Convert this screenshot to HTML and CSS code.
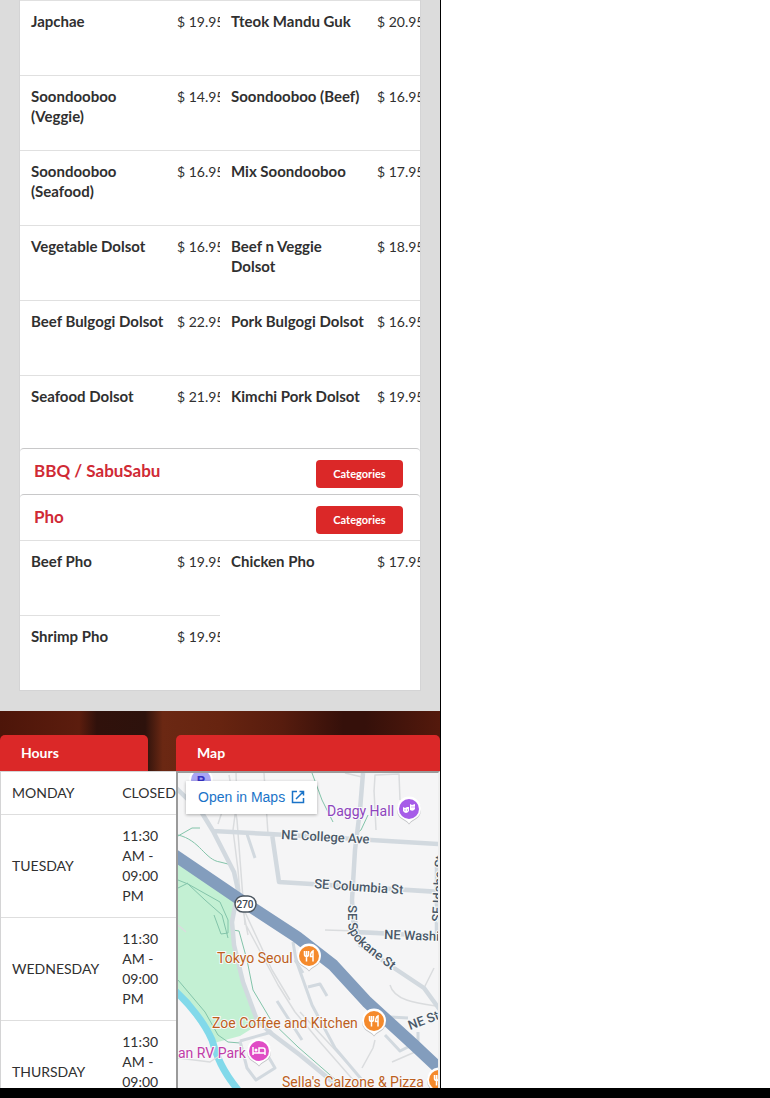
FILE: index.html
```html
<!DOCTYPE html>
<html lang="en">
<head>
    <meta charset="UTF-8">
    <meta name="viewport" content="width=device-width, initial-scale=1.0">
    <title>Menu</title>
    <link rel="stylesheet" href="styles.css">
</head>
<body>

    <div class="viewport">
        <div class="page">
            <main class="menu">
                <div class="accordion">
                    <div class="items">
                        <div class="item"><h4 class="name">Japchae</h4><span class="price">$ 19.95</span></div>
                        <div class="item"><h4 class="name">Tteok Mandu Guk</h4><span class="price">$ 20.95</span></div>
                        <div class="item"><h4 class="name">Soondooboo (Veggie)</h4><span class="price">$ 14.95</span></div>
                        <div class="item"><h4 class="name">Soondooboo (Beef)</h4><span class="price">$ 16.95</span></div>
                        <div class="item"><h4 class="name">Soondooboo (Seafood)</h4><span class="price">$ 16.95</span></div>
                        <div class="item"><h4 class="name">Mix Soondooboo</h4><span class="price">$ 17.95</span></div>
                        <div class="item"><h4 class="name">Vegetable Dolsot</h4><span class="price">$ 16.95</span></div>
                        <div class="item"><h4 class="name">Beef n Veggie Dolsot</h4><span class="price">$ 18.95</span></div>
                        <div class="item"><h4 class="name">Beef Bulgogi Dolsot</h4><span class="price">$ 22.95</span></div>
                        <div class="item"><h4 class="name">Pork Bulgogi Dolsot</h4><span class="price">$ 16.95</span></div>
                        <div class="item"><h4 class="name">Seafood Dolsot</h4><span class="price">$ 21.95</span></div>
                        <div class="item"><h4 class="name">Kimchi Pork Dolsot</h4><span class="price">$ 19.95</span></div>
                    </div>

                    <div class="title">
                        <h3>BBQ / SabuSabu</h3>
                        <button class="button" type="button">Categories</button>
                    </div>

                    <div class="title">
                        <h3>Pho</h3>
                        <button class="button" type="button">Categories</button>
                    </div>
                    <div class="items">
                        <div class="item"><h4 class="name">Beef Pho</h4><span class="price">$ 19.95</span></div>
                        <div class="item"><h4 class="name">Chicken Pho</h4><span class="price">$ 17.95</span></div>
                        <div class="item"><h4 class="name">Shrimp Pho</h4><span class="price">$ 19.95</span></div>
                    </div>
                </div>
            </main>

            <footer class="footer">
                <section class="hours">
                    <h4 class="heading">Hours</h4>
                    <table class="hours-table">
                        <tr><th scope="row">MONDAY</th><td>CLOSED</td></tr>
                        <tr><th scope="row">TUESDAY</th><td>11:30 AM - 09:00 PM</td></tr>
                        <tr><th scope="row">WEDNESDAY</th><td>11:30 AM - 09:00 PM</td></tr>
                        <tr><th scope="row">THURSDAY</th><td>11:30 AM - 09:00 PM</td></tr>
                    </table>
                </section>

                <section class="location">
                    <h4 class="heading">Map</h4>
                    <div class="map">
                        <svg class="map-canvas" viewBox="178 773 260 360" preserveAspectRatio="xMinYMin slice">
                            <defs>
                                <path id="pin" d="M0 14.500C-2.500 11-6 10.500-9 7.500A12 12 0 1 1 9 7.500C6 10.500 2.500 11 0 14.500Z"/>
                                <g id="food">
                                    <use href="#pin" fill="#8b8f94" opacity=".5" y="1"/>
                                    <use href="#pin" fill="#fff"/>
                                    <circle r="10" fill="#f58a2c"/>
                                    <path d="M-4.500-5v3.500a2 2 0 0 0 4 0V-5M-2.500-5V5.500M4 5.500V-5C2-4 1.500-2 1.500.5H4" fill="none" stroke="#fff" stroke-width="1.500"/>
                                </g>
                            </defs>

                            <!-- park and river -->
                            <path class="park" d="M176 862 236 903 232 925 236 950 245 985 259 1024 240 1036 214 1043 176 992Z"/>
                            <path class="river" d="M174 990C190 1004 205 1024 212 1040C217 1057 222 1070 238 1090"/>

                            <!-- minor lines -->
                            <path class="rail" d="M236 773 237 800 233 830 238 870 240 895 248 935M229 775 237 820 245 925M246 925 262 955 278 985 295 1012 320 1042 362 1090M244 910 258 940 272 970 290 1000M264 773 268 834M374 792 375 775 399 774 400 800M345 773 362 777M178 1058 210 1062 225 1052M218 824 222 812 217 806M376 830 374 790M390 985C394 1000 415 1003 436 1006M424 988 434 968M362 1068 373 1048 375 1040M325 930 390 932M392 1062 415 1052M300 1012 350 1066M178 925 186 932"/>
                            <path class="trail" d="M178 835C200 840 205 860 220 862L232 865M178 836 192 828 200 828M178 880 188 884 205 900 222 915 228 938M178 888 188 883M188 884 220 902 228 920V933L221 934 214 915M233 930 239 931 247 960 253 990 272 1022 298 1047 345 1088M178 980 205 1012 218 1035 228 1042 240 1043M312 773 322 800 333 822M368 815 361 830 357 833"/>

                            <!-- streets -->
                            <path class="road" d="M176 788 202 813 213 831 234 872 238 890 232 922 234 945 243 982 257 1020 272 1034 300 1055 345 1092M213 831 270 834 440 844M272 834 279 882 440 892M363 773 360 810 355 850 352 900 354 932 440 936M437 860V935M352 905 360 945 397 970 424 988 440 1010"/>
                            <path class="road thin" d="M247 834 255 858M293 942 296 960 312 1005 335 1048 362 1080M303 973 295 960M240 1041 272 1032M240 1041 247 1068 256 1080 275 1068 268 1056M277 1001 302 1040M308 987 320 984 327 996M390 1017 408 1018M418 1032V1042L412 1046M385 1035 400 1051 412 1045"/>

                            <path class="highway" d="M170 852 245 903 297 937 333 965 367 1002 413 1044 445 1074"/>

                            <rect x="235" y="896" width="21" height="16" rx="8" fill="#fff" stroke="#4b555f" stroke-width="1.500"/>
                            <text class="shield" x="245" y="908" text-anchor="middle">270</text>

                            <g class="street">
                                <text transform="translate(281 839) rotate(3)">NE College Ave</text>
                                <text transform="translate(314 888) rotate(4)">SE Columbia St</text>
                                <text transform="translate(384 939) rotate(2)">NE Washington St</text>
                                <path id="spokane" d="M348 905 348 924C350 942 362 947 400 977" fill="none"/>
                                <text><textPath href="#spokane">SE Spokane St</textPath></text>
                                <text transform="translate(441 922) rotate(-87)">SE Idaho St</text>
                                <text transform="translate(410 1030) rotate(-20)">NE State St</text>
                            </g>

                            <g class="place">
                                <text x="327" y="816" fill="#8e44bd">Daggy Hall</text>
                                <text x="217" y="963" fill="#bd5f1d">Tokyo Seoul</text>
                                <text x="212" y="1028" fill="#bd5f1d">Zoe Coffee and Kitchen</text>
                                <text x="178" y="1058" fill="#c13ca8">an RV Park</text>
                                <text x="282" y="1087" fill="#bd5f1d">Sella's Calzone &amp; Pizza</text>
                            </g>

                            <use href="#food" x="309" y="956"/>
                            <use href="#food" x="374" y="1021"/>
                            <use href="#food" x="439" y="1080"/>

                            <g transform="translate(409 809)">
                                <use href="#pin" fill="#8b8f94" opacity=".5" y="1"/>
                                <use href="#pin" fill="#fff"/>
                                <circle r="10" fill="#a65ce8"/>
                                <path d="M-6-2 -4-1 -2-2H0V2Q-3 6-6 2ZM1-5 3-4 6-5V0Q4 3 1 1Z" fill="#fff"/>
                                <path d="M-4.500 1h1M-2 1h1M2.500-2h1M4.500-2h1" stroke="#a65ce8"/>
                            </g>
                            <g transform="translate(259 1051)">
                                <use href="#pin" fill="#8b8f94" opacity=".5" y="1"/>
                                <use href="#pin" fill="#fff"/>
                                <circle r="10" fill="#e04cc5"/>
                                <path d="M-6-4V4M-6 2H6V4M6 2V-1Q6-3 4-3H0V2" fill="none" stroke="#fff" stroke-width="1.500"/>
                                <circle cx="-3" cy="-1" r="1.500" fill="#fff"/>
                            </g>
                            <circle cx="201" cy="780" r="12" fill="#fff"/>
                            <circle cx="201" cy="780" r="10" fill="#a9a5f5"/>
                            <text class="parking" x="201" y="785" text-anchor="middle">P</text>
                        </svg>
                        <a class="open-maps" href="#">Open in Maps
                            <svg width="14" height="14" viewBox="0 0 14 14" fill="none" stroke="#1a73c8" stroke-width="1.500"><path d="M6 1.500H1.500v11h11V8M8.500 1.500h4v4M12.500 1.500 5 9"/></svg>
                        </a>
                    </div>
                </section>
            </footer>
        </div>
        <div class="side"></div>
    </div>

</body>
</html>
```
FILE: styles.css
```css
* {
    box-sizing: border-box;
}

body {
    margin: 0;
    height: 100vh;
    overflow: hidden;
    border-bottom: 10px solid #000;
    background-color: #fff;
    font-family: Lato, "Liberation Sans", sans-serif;
    font-size: 14px;
    line-height: 20px;
    color: #303030;
}

h3,
h4 {
    margin: 0;
}

.viewport {
    display: grid;
    grid-template-columns: minmax(0, 4fr) minmax(0, 3fr);
    height: 100%;
    overflow: hidden;
}

.side {
    border-left: 1px solid #000;
}

/* Menu */
.menu {
    background-color: #dcdcdc;
    padding: 0 20px 21px;
}

.accordion {
    background-color: #fff;
    box-shadow: 0 0 0 1px #d4d4d5;
}

.items {
    display: flex;
    flex-wrap: wrap;
}

.items:first-child {
    margin-bottom: -2px;
}

.item {
    display: flex;
    width: 50%;
    min-height: 75px;
    padding-top: 10px;
    border-top: 1px solid #e0e0e0;
    overflow: hidden;
}

.name {
    flex: 0 0 78%;
    padding: 0 9px 0 11px;
    font-size: 15px;
}

.price {
    padding: 1px 0 0 1px;
    white-space: nowrap;
}

.title {
    display: flex;
    justify-content: space-between;
    align-items: center;
    height: 46px;
    padding: 0 17px 2px 14px;
    border-top: 1px solid #c8c8c9;
    border-radius: 4px 4px 0 0;
    background-color: #fff;
}

.title h3 {
    font-size: 17px;
    color: #d02a35;
}

.button {
    width: 87px;
    height: 28px;
    margin-top: 6px;
    padding: 0;
    border: none;
    border-radius: 4px;
    background-color: #db2828;
    color: #fff;
    font-family: inherit;
    font-size: 11px;
    font-weight: bold;
    cursor: pointer;
}

/* Footer */
.footer {
    display: grid;
    grid-template-columns: 2fr 3fr;
    padding-top: 24px;
    background: linear-gradient(90deg, #4d1509, #5c1d0e 18%, #30110b 22%, #2d120c 33%, #6b2813 37%, #672410 50%, #571c0e 64%, #35100a 78%, #35100a 83%, #54190c);
}

.heading {
    height: 36px;
    padding: 8px 21px;
    border-radius: 5px 5px 0 0;
    background-color: #db2828;
    color: #fff;
    font-size: 14px;
}

.hours .heading {
    width: 84%;
}

.hours-table {
    width: 100%;
    table-layout: fixed;
    border-spacing: 0;
    border: solid #d4d4d5;
    border-width: 1px 0 0 1px;
    background-color: #fff;
}

.hours-table th,
.hours-table td {
    padding: 11px 0 11px 11px;
    border-bottom: 1px solid #dedede;
    font-weight: normal;
    text-align: left;
    vertical-align: middle;
}

.hours-table th {
    width: 63%;
}

.map {
    position: relative;
    height: 360px;
    overflow: hidden;
    border: 2px inset #eee;
    background-color: #f5f5f6;
}

.map-canvas {
    display: block;
    width: 100%;
    height: 100%;
    font-family: Roboto, sans-serif;
}

.open-maps {
    position: absolute;
    top: 8px;
    left: 8px;
    display: flex;
    align-items: center;
    gap: 6px;
    height: 33px;
    padding: 0 12px 1px;
    background-color: #fff;
    box-shadow: 0 1px 3px rgba(0, 0, 0, 0.3);
    color: #1a73c8;
    font-family: "Liberation Sans", sans-serif;
    font-size: 14px;
    text-decoration: none;
}

/* Map drawing */
.park {
    fill: #c3f0d3;
}

.river {
    fill: none;
    stroke: #82d9ea;
    stroke-width: 7;
}

.rail,
.trail,
.road,
.highway {
    fill: none;
    stroke-linejoin: round;
}

.rail {
    stroke: #dadcde;
    stroke-width: 1.5;
}

.trail {
    stroke: #83c4aa;
    stroke-width: 1;
}

.road {
    stroke: #d2d9df;
    stroke-width: 4.5;
}

.road.thin {
    stroke-width: 3;
}

.highway {
    stroke: #839dbd;
    stroke-width: 12;
}

.street text,
.place text {
    paint-order: stroke;
    stroke: #f8f9fa;
    stroke-width: 2px;
}

.street text {
    fill: #4b5968;
    font-size: 13px;
    font-weight: 500;
}

.place text {
    font-size: 14px;
}

.shield {
    fill: #3c4650;
    font-size: 10px;
    font-weight: 500;
}

.parking {
    fill: #3730c4;
    font-size: 13px;
    font-weight: bold;
}
```
